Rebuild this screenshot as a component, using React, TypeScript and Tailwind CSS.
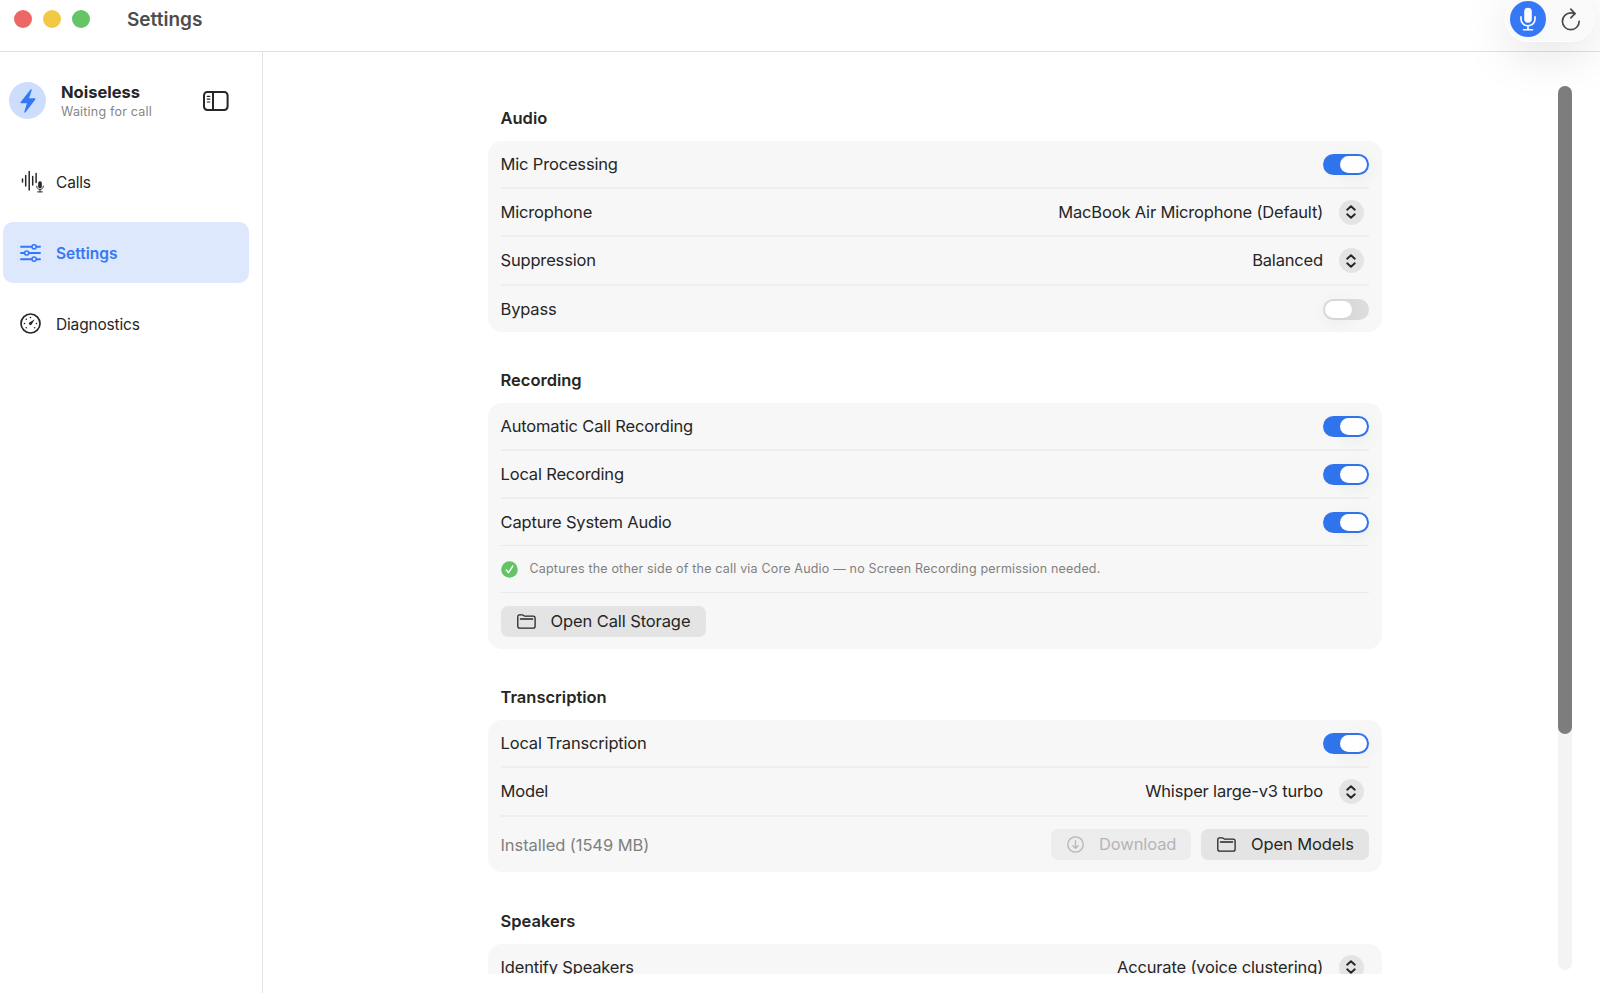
import React from "react";

interface IIcon {
    className?: string;
}

const BoltIcon: React.FC<IIcon> = ({ className }) => (
    <svg viewBox="0 0 16 24" className={className} fill="currentColor">
        <path d="M10.6.5c.6-.6 1.4-.2 1.1.7L9 9.3h5.7c.8 0 1.1.6.6 1.2L5.5 23.3c-.6.7-1.5.3-1.2-.6L7 14.2H1.3c-.8 0-1.1-.6-.6-1.2z" />
    </svg>
);

const SidebarIcon: React.FC<IIcon> = ({ className }) => (
    <svg viewBox="0 0 26 20" className={className} fill="none" stroke="currentColor" strokeLinecap="round">
        <rect x="1" y="1" width="23.6" height="18" rx="3.4" strokeWidth="2" />
        <path d="M10 1.5v17" strokeWidth="2" />
        <path d="M4.3 5.4h2.5M4.3 8.2h2.5M4.3 11h2.5" strokeWidth="1.2" />
    </svg>
);

const WaveMicIcon: React.FC<IIcon> = ({ className }) => (
    <svg viewBox="0 0 23 23" className={className} fill="none" stroke="currentColor" strokeLinecap="round">
        <path d="M1.5 9v3M4.7 5.5V16M8.2 1.5V20M11.7 6.5V15M15.1 3.5v9" strokeWidth="1.5" />
        <rect x="17.2" y="11.2" width="3.6" height="7" rx="1.8" fill="currentColor" stroke="none" />
        <path d="M15.7 16.2c0 4.4 6.6 4.4 6.6 0M19 19.8v2M16.7 21.9h4.6" strokeWidth="1" />
    </svg>
);

const SlidersIcon: React.FC<IIcon> = ({ className }) => (
    <svg viewBox="0 0 21 18" className={className} fill="none" stroke="currentColor" strokeLinecap="round" strokeWidth="1.9">
        <path d="M1 2.8h10.6M16.6 2.8H20M1 9h3.4M9 9h11M1 15.2h10.6M16.6 15.2H20" />
        <circle cx="14.1" cy="2.8" r="2.1" strokeWidth="1.5" />
        <circle cx="6.7" cy="9" r="2.1" strokeWidth="1.5" />
        <circle cx="14.1" cy="15.2" r="2.1" strokeWidth="1.5" />
    </svg>
);

const GaugeIcon: React.FC<IIcon> = ({ className }) => (
    <svg viewBox="0 0 21 21" className={className} fill="none" stroke="currentColor">
        <circle cx="10.5" cy="10.5" r="9.5" strokeWidth="1.7" />
        <path d="M14.8 6.3 11.6 11.6a1.5 1.5 0 1 1-2.2-2.2z" fill="currentColor" stroke="none" />
        <g fill="currentColor" stroke="none">
            <circle cx="10.5" cy="4.5" r=".8" />
            <circle cx="6.3" cy="6.3" r=".8" />
            <circle cx="4.5" cy="10.5" r=".8" />
            <circle cx="6.3" cy="14.7" r=".8" />
            <circle cx="16.5" cy="10.5" r=".8" />
            <circle cx="14.7" cy="14.7" r=".8" />
        </g>
    </svg>
);

const MicIcon: React.FC<IIcon> = ({ className }) => (
    <svg viewBox="0 0 16 24" className={className} fill="none" stroke="currentColor" strokeLinecap="round" strokeWidth="1.6">
        <rect x="4.2" y=".8" width="7.6" height="15" rx="3.8" fill="currentColor" stroke="none" />
        <path d="M1 9.8v2.4a7 6.6 0 0 0 14 0V9.8M8 19v3.5M3.5 22.7h9" />
    </svg>
);

const RefreshIcon: React.FC<IIcon> = ({ className }) => (
    <svg viewBox="0 0 20 23" className={className} fill="none" stroke="currentColor" strokeLinecap="round" strokeLinejoin="round" strokeWidth="1.7">
        <path d="M18.2 13.3A8.4 8.4 0 1 1 9.8 4.9c1.3 0 2.7.2 4 .7" />
        <path d="M9.8 1.2l4.2 4.4-4.2 4.2" />
    </svg>
);

const FolderIcon: React.FC<IIcon> = ({ className }) => (
    <svg viewBox="0 0 19 15" className={className} fill="none" stroke="currentColor" strokeLinejoin="round" strokeLinecap="round" strokeWidth="1.3">
        <path d="M.8 12.3V2.6C.8 1.4 1.4.8 2.5.8h2.6c.6 0 .9.2 1.3.5l.6.5c.4.3.7.4 1.3.4h7.9c1.2 0 1.9.7 1.9 1.9v8.2c0 1.2-.6 1.9-1.9 1.9H2.7c-1.2 0-1.9-.7-1.9-1.9z" />
        <path d="M3.4 5h12.3" />
    </svg>
);

const DownloadIcon: React.FC<IIcon> = ({ className }) => (
    <svg viewBox="0 0 17 17" className={className} fill="none" stroke="currentColor" strokeLinecap="round" strokeLinejoin="round" strokeWidth="1.3">
        <circle cx="8.5" cy="8.5" r="7.7" />
        <path d="M8.5 4.6v7.6M5.7 9.6l2.8 2.7 2.8-2.7" />
    </svg>
);

const CheckBadge: React.FC<IIcon> = ({ className }) => (
    <svg viewBox="0 0 17 17" className={className}>
        <circle cx="8.5" cy="8.5" r="8.3" fill="#63c466" />
        <path d="M5.3 9l2.3 2.7 4.2-6.6" fill="none" stroke="#fff" strokeWidth="1.4" strokeLinecap="round" strokeLinejoin="round" />
    </svg>
);

const Toggle: React.FC<{ isOn: boolean }> = ({ isOn }) => (
    <div className={`flex w-[46px] h-[21px] p-[2px] rounded-full ${isOn ? "bg-[#3175ee] justify-end" : "bg-[#dcdcdc]"}`}>
        <div className="w-[27px] h-[17px] rounded-full bg-white shadow-[0_3px_18px_rgba(0,0,0,0.07)]" />
    </div>
);

const Picker: React.FC<{ value: string }> = ({ value }) => (
    <div className="flex items-center pr-[5px]">
        <span>{value}</span>
        <div className="flex items-center justify-center w-[25px] h-[25px] ml-4 rounded-full bg-[#e4e4e4]">
            <svg viewBox="0 0 10 14" className="w-[10px] h-[14px] mr-[1px]" fill="none" stroke="#262626" strokeWidth="1.9" strokeLinecap="round" strokeLinejoin="round">
                <path d="M1.2 4.7 5 1.2l3.8 3.5M1.2 9.3 5 12.8l3.8-3.5" />
            </svg>
        </div>
    </div>
);

interface IActionButton {
    icon: React.ReactNode;
    title: string;
    className: string;
}

const ActionButton: React.FC<IActionButton> = ({ icon, title, className }) => (
    <button className={`flex items-center h-[31px] pl-4 rounded-[7px] tracking-[-0.1px] ${className}`}>
        {icon}
        <span>{title}</span>
    </button>
);

interface IRow {
    className: string;
    label?: string;
    children?: React.ReactNode;
}

const Row: React.FC<IRow> = ({ className, label, children }) => (
    <div className={`flex items-center justify-between ${className}`}>
        {label && <span>{label}</span>}
        {children}
    </div>
);

interface ISection {
    title: string;
    className: string;
    children: React.ReactNode;
}

const Section: React.FC<ISection> = ({ title, className, children }) => (
    <section className={`flex flex-col shrink-0 ${className}`}>
        <h2 className="h-6 mb-[11px] pl-[12.5px] leading-6 font-semibold">{title}</h2>
        <div className="pl-[12.5px] pr-[13px] rounded-[14px] bg-[#f7f7f7] tracking-[-0.17px]">{children}</div>
    </section>
);

interface INavItem {
    icon: React.ReactNode;
    title: string;
    isActive?: boolean;
}

const NavItem: React.FC<INavItem> = ({ icon, title, isActive }) => (
    <div className={`flex items-center w-[246px] h-[61px] pl-[17px] rounded-[10px] text-[15.5px] ${isActive ? "bg-[#dee8fd] text-[#3478f6] font-semibold" : "text-[#262626] tracking-[-0.17px]"}`}>
        <div className="flex items-center w-9">{icon}</div>
        <span className="pt-[2px]">{title}</span>
    </div>
);

export default function App() {
    return (
        <div className="flex flex-col w-[1600px] h-[993px] overflow-hidden bg-white font-['Inter',sans-serif] text-[#262626]">
            <header className="flex items-start justify-between shrink-0 h-[52px] border-b border-[#e0e0e0]">
                <div className="flex items-center h-[38px] pl-[14px]">
                    <div className="flex gap-[11px]">
                        <div className="w-[18px] h-[18px] rounded-full bg-[#ec6765]" />
                        <div className="w-[18px] h-[18px] rounded-full bg-[#f2c944]" />
                        <div className="w-[18px] h-[18px] rounded-full bg-[#65c466]" />
                    </div>
                    <h1 className="ml-[37px] pt-[2px] text-[19px] font-semibold text-[#4d4d4d]">Settings</h1>
                </div>
                <div className="relative flex items-center w-[89px] h-[46px] -mt-1 mr-[6px] pl-1 rounded-full border border-white bg-[#f9f9f9] shadow-[0_10px_50px_rgba(0,0,0,0.12)]">
                    <div className="flex items-center justify-center w-9 h-9 rounded-full bg-[#3478f6] text-white">
                        <MicIcon className="w-4 h-6" />
                    </div>
                    <RefreshIcon className="w-5 h-[23px] ml-[15px] text-[#4a4a4a]" />
                </div>
            </header>

            <div className="flex flex-1 min-h-0">
                <aside className="flex flex-col shrink-0 w-[263px] border-r border-[#e4e4e4]">
                    <div className="flex items-center h-[37px] mt-[30px] pl-[9px]">
                        <div className="flex items-center justify-center w-[37px] h-[37px] rounded-full bg-[#cdddfc] text-[#3478f6]">
                            <BoltIcon className="w-4 h-6" />
                        </div>
                        <div className="flex flex-col w-[142px] ml-[15px] pt-[3px]">
                            <span className="text-[16.5px] leading-[19px] font-bold">Noiseless</span>
                            <span className="text-[12.5px] leading-5 tracking-[0.2px] text-[#858585]">Waiting for call</span>
                        </div>
                        <SidebarIcon className="w-[26px] h-5" />
                    </div>
                    <nav className="flex flex-col gap-[10px] mt-[32px] pl-[3px]">
                        <NavItem title="Calls" icon={<WaveMicIcon className="w-[23px] h-[23px] ml-[1px]" />} />
                        <NavItem title="Settings" isActive icon={<SlidersIcon className="w-[21px] h-[18px]" />} />
                        <NavItem title="Diagnostics" icon={<GaugeIcon className="w-[21px] h-[21px]" />} />
                    </nav>
                </aside>

                <main className="flex flex-1 justify-between pl-[225px] pr-7">
                    <div className="flex flex-col w-[894px] h-[922px] overflow-hidden text-[16.5px]">
                        <Section title="Audio" className="pt-[54px]">
                            <Row className="h-[48px] border-b-2 border-[#eeeeee]" label="Mic Processing"><Toggle isOn /></Row>
                            <Row className="h-[48px] border-b-2 border-[#eeeeee]" label="Microphone"><Picker value="MacBook Air Microphone (Default)" /></Row>
                            <Row className="h-[49px] border-b-2 border-[#eeeeee]" label="Suppression"><Picker value="Balanced" /></Row>
                            <Row className="h-[46px]" label="Bypass"><Toggle isOn={false} /></Row>
                        </Section>

                        <Section title="Recording" className="pt-[36px]">
                            <Row className="h-[48px] border-b-2 border-[#eeeeee]" label="Automatic Call Recording"><Toggle isOn /></Row>
                            <Row className="h-[48px] border-b-2 border-[#eeeeee]" label="Local Recording"><Toggle isOn /></Row>
                            <Row className="h-[47px] border-b border-[#e9e9e9]" label="Capture System Audio"><Toggle isOn /></Row>
                            <Row className="h-[47px] border-b border-[#e9e9e9]">
                                <div className="flex items-center text-[12.5px] tracking-[0.19px] text-[#808080]">
                                    <CheckBadge className="w-[17px] h-[17px] mr-3" />
                                    <span>Captures the other side of the call via Core Audio — no Screen Recording permission needed.</span>
                                </div>
                            </Row>
                            <Row className="h-[56px]">
                                <ActionButton title="Open Call Storage" className="w-[205px] bg-[#e4e4e4]" icon={<FolderIcon className="w-[19px] h-[15px] mr-[15px]" />} />
                            </Row>
                        </Section>

                        <Section title="Transcription" className="pt-[36px]">
                            <Row className="h-[48px] border-b-2 border-[#eeeeee]" label="Local Transcription"><Toggle isOn /></Row>
                            <Row className="h-[49px] border-b-2 border-[#eeeeee]" label="Model"><Picker value="Whisper large-v3 turbo" /></Row>
                            <Row className="h-[55px]">
                                <span className="pt-[1px] text-[#808080] tracking-[-0.07px]">Installed (1549 MB)</span>
                                <div className="flex gap-[10px]">
                                    <ActionButton title="Download" className="w-[140px] bg-[#ededed] text-[#b5b5b5]" icon={<DownloadIcon className="w-[17px] h-[17px] mr-[15px]" />} />
                                    <ActionButton title="Open Models" className="w-[168px] bg-[#e4e4e4]" icon={<FolderIcon className="w-[19px] h-[15px] mr-[15px]" />} />
                                </div>
                            </Row>
                        </Section>

                        <Section title="Speakers" className="pt-[37px]">
                            <Row className="h-[46px]" label="Identify Speakers"><Picker value="Accurate (voice clustering)" /></Row>
                        </Section>
                    </div>

                    <div className="w-[14px] h-[884px] mt-[34px] rounded-full bg-[#f3f3f3]">
                        <div className="h-[648px] rounded-full bg-[#7d7d7d]" />
                    </div>
                </main>
            </div>
        </div>
    );
}
